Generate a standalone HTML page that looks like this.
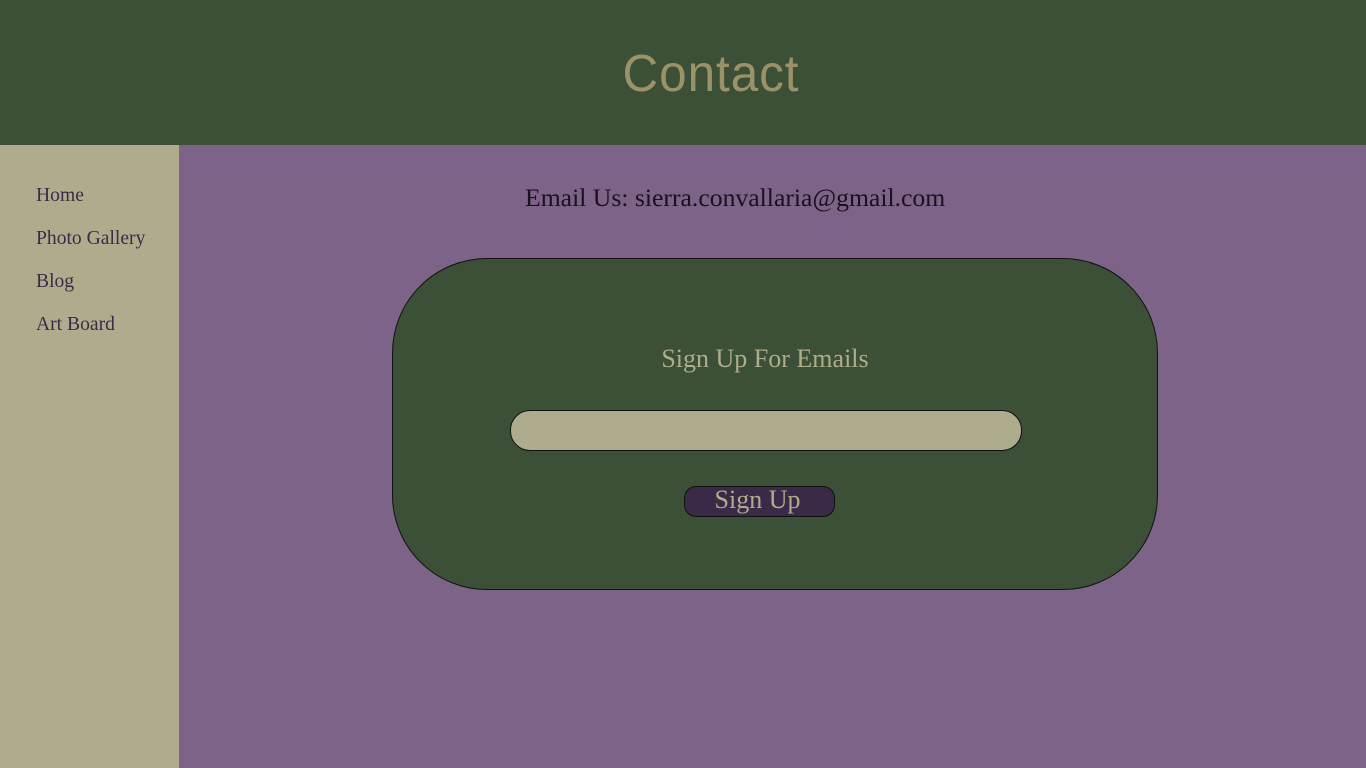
<!DOCTYPE html>
<html><head><style>
body{margin:0;width:1366px;height:768px;position:relative;overflow:hidden;background:#7e6388;font-family:"Liberation Serif",serif}
.hdr{position:absolute;left:0;top:0;width:1366px;height:145px;background:#3b5036}
.hdr h1{position:absolute;left:28px;width:1366px;top:44px;margin:0;text-align:center;font-weight:normal;font-size:52px;color:#9b9268;font-family:"Liberation Sans",sans-serif;letter-spacing:1px;line-height:60px;transform:scaleX(0.95)}
.side{position:absolute;left:0;top:145px;width:179px;height:623px;background:#afac8e}
.side a{position:absolute;left:36px;font-size:19.6px;color:#3a2b47;text-decoration:none}
.email{position:absolute;left:525px;top:183px;font-size:25.7px;color:#1a1020;white-space:nowrap}
.panel{position:absolute;left:392px;top:258px;width:764px;height:330px;background:#3b5036;border:1px solid #111;border-radius:95px}
.panel h2{position:absolute;left:-10px;width:764px;top:85px;margin:0;text-align:center;font-weight:normal;font-size:26px;color:#b0ac8c}
.inp{position:absolute;left:117px;top:151px;width:510px;height:39px;background:#afac8e;border:1px solid #111;border-radius:20px}
.btn{position:absolute;left:291px;top:227px;width:149px;height:29px;background:#3a2a48;border:1px solid #111;border-radius:12px;color:#b0ac8c;font-size:26px;text-align:center;line-height:26px}
.btn span{position:relative;left:-2px}
</style></head><body>
<div class="hdr"><h1>Contact</h1></div>
<div class="side">
<a style="top:40px">Home</a>
<a style="top:83px">Photo Gallery</a>
<a style="top:126px">Blog</a>
<a style="top:169px">Art Board</a>
</div>
<div class="email">Email Us: sierra.convallaria@gmail.com</div>
<div class="panel">
<h2>Sign Up For Emails</h2>
<div class="inp"></div>
<div class="btn"><span>Sign Up</span></div>
</div>
</body></html>
